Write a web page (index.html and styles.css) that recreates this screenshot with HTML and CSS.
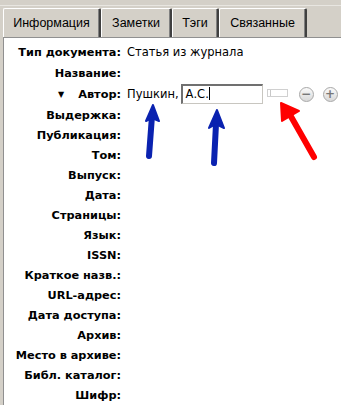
FILE: index.html
```html
<!DOCTYPE html>
<html lang="ru">
<head>
    <meta charset="UTF-8">
    <title>Информация</title>
    <link rel="stylesheet" href="styles.css">
</head>
<body>
    <div class="window">
        <div class="tabs">
            <div class="tab tab-info">Информация</div>
            <div class="tab tab-notes">Заметки</div>
            <div class="tab tab-tags">Тэги</div>
            <div class="tab tab-related">Связанные</div>
        </div>

        <div class="panel">
            <div class="row tall">
                <div class="label">Тип документа:</div>
                <div class="value">Статья из журнала</div>
            </div>
            <div class="row">
                <div class="label">Название:</div>
                <div class="value"></div>
            </div>
            <div class="row tall">
                <div class="label"><span class="twisty">&#9660;</span>Автор:</div>
                <div class="value author">
                    <span class="last">Пушкин,</span>
                    <span class="field">А.С.<span class="caret"></span></span>
                    <span class="mode-btn"></span>
                    <span class="round-btn">&minus;</span>
                    <span class="round-btn">+</span>
                </div>
            </div>
            <div class="row"><div class="label">Выдержка:</div></div>
            <div class="row"><div class="label">Публикация:</div></div>
            <div class="row"><div class="label">Том:</div></div>
            <div class="row"><div class="label">Выпуск:</div></div>
            <div class="row"><div class="label">Дата:</div></div>
            <div class="row"><div class="label">Страницы:</div></div>
            <div class="row"><div class="label">Язык:</div></div>
            <div class="row"><div class="label">ISSN:</div></div>
            <div class="row"><div class="label">Краткое назв.:</div></div>
            <div class="row"><div class="label">URL-адрес:</div></div>
            <div class="row"><div class="label">Дата доступа:</div></div>
            <div class="row"><div class="label">Архив:</div></div>
            <div class="row"><div class="label">Место в архиве:</div></div>
            <div class="row"><div class="label">Библ. каталог:</div></div>
            <div class="row"><div class="label">Шифр:</div></div>
        </div>
    </div>

    <!-- hand-drawn arrows on top of the screenshot -->
    <svg class="marks" width="341" height="405" viewBox="0 0 341 405">
        <g fill="#0a22b0" stroke="#0a22b0" stroke-linejoin="round" stroke-linecap="round">
            <line x1="149" y1="156" x2="152" y2="116" stroke-width="6"/>
            <polygon points="153,105 146,121 152,118 159,121" stroke-width="2"/>
            <line x1="214" y1="163" x2="216" y2="124" stroke-width="6"/>
            <polygon points="217,110 209,128 216,124 224,128" stroke-width="2"/>
        </g>
        <g fill="#ff0000" stroke="#ff0000" stroke-linejoin="round" stroke-linecap="round">
            <line x1="314" y1="157" x2="289" y2="113" stroke-width="6"/>
            <polygon points="281,103 282,121 299,111" stroke-width="2"/>
        </g>
    </svg>
</body>
</html>
```

FILE: styles.css
```css
body {
    margin: 0;
    background-color: #d4d0c8;
    font-family: 'DejaVu Sans', Verdana, sans-serif;
    font-size: 11px;
    color: #000;
}

.window {
    width: 341px;
    height: 405px;
    overflow: hidden;
    border-top: 1px solid #e8e6e1;
    margin-top: 5px;
    box-sizing: border-box;
}

.tabs {
    display: flex;
    padding: 2px 0 0 3px;
    height: 31px;
    box-sizing: border-box;
}

.tab {
    box-sizing: border-box;
    text-align: center;
    font-family: 'Liberation Sans', Arial, sans-serif;
    font-size: 12.5px;
    line-height: 28px;
    border-top: 1px solid #fff;
    border-left: 1px solid #fff;
    border-right: 2px solid #404040;
    border-top-left-radius: 2px;
    border-top-right-radius: 2px;
    box-shadow: inset -1px 0 0 #808080;
}

.tab-info { width: 98px; }
.tab-notes { width: 71px; }
.tab-tags { width: 47px; }
.tab-related { width: 88px; }

.panel {
    background-color: #fff;
    border-top: 1px solid #909090;
    border-left: 1px solid #909090;
    margin-left: 3px;
    padding-top: 3px;
    height: 400px;
}

.row {
    display: flex;
    align-items: center;
    height: 20px;
}

.row.tall {
    height: 22px;
}

.label {
    width: 117px;
    flex: none;
    text-align: right;
    font-weight: bold;
    font-size: 11.3px;
    white-space: nowrap;
}

.twisty {
    font-size: 8px;
    margin-right: 14px;
    vertical-align: 1px;
}

.value {
    padding-left: 6px;
    font-size: 11.5px;
    white-space: nowrap;
}

.author {
    display: flex;
    align-items: center;
}

.field {
    width: 76px;
    height: 17px;
    line-height: 17px;
    margin-left: 2px;
    padding-left: 3px;
    border-top: 2px solid #707070;
    border-left: 2px solid #707070;
    border-right: 1px solid #c8c6c0;
    border-bottom: 1px solid #c8c6c0;
}

.caret {
    display: inline-block;
    width: 1px;
    height: 13px;
    background-color: #000;
    vertical-align: -2px;
}

.mode-btn {
    width: 19px;
    height: 6px;
    margin: 0 0 0 4px;
    border: 1px solid #d0d0d0;
    box-shadow: inset 2px 0 0 #fff, inset 3px 0 0 #c8c8c8;
    position: relative;
    top: -1px;
}

.round-btn {
    width: 13px;
    height: 13px;
    margin-left: 11px;
    border: 1px solid #a8a8a8;
    border-radius: 50%;
    background: linear-gradient(#fafafa, #d8d8d8);
    color: #777;
    font-size: 12px;
    font-weight: bold;
    line-height: 13px;
    text-align: center;
}

.round-btn + .round-btn {
    margin-left: 9px;
}

.marks {
    position: absolute;
    left: 0;
    top: 0;
    pointer-events: none;
}
```
